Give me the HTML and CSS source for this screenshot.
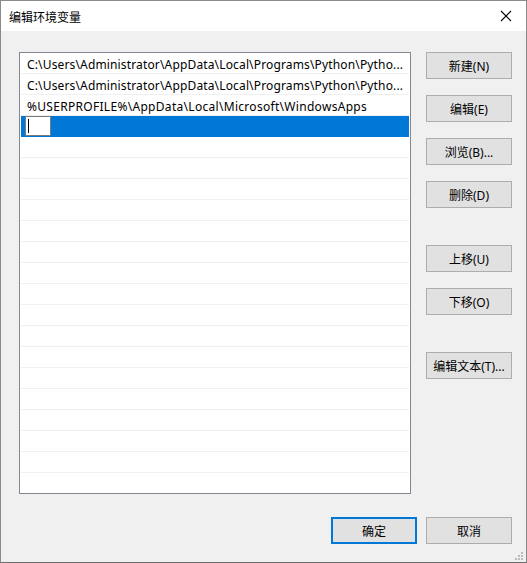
FILE: index.html
```html
<!DOCTYPE html>
<html lang="zh-CN">
<head>
<meta charset="utf-8">
<title>编辑环境变量</title>
<link rel="stylesheet" href="styles.css">
</head>
<body>
<div class="window">
  <div class="titlebar">
    <span class="title">编辑环境变量</span>
    <svg class="close" width="12" height="12" viewBox="0 0 12 12"><path d="M1 1 L11 11 M11 1 L1 11" stroke="#000" stroke-width="1.1" fill="none"/></svg>
  </div>
  <div class="content">
    <div class="main">
      <div class="list">
        <div class="row"><span>C:\Users\Administrator\AppData\Local\Programs\Python\Pytho...</span></div>
        <div class="row"><span>C:\Users\Administrator\AppData\Local\Programs\Python\Pytho...</span></div>
        <div class="row caps"><span>%USERPROFILE%\AppData\Local\Microsoft\WindowsApps</span></div>
        <div class="row selected"><div class="editbox"><i class="caret"></i></div></div>
        <div class="row"></div><div class="row"></div><div class="row"></div><div class="row"></div>
        <div class="row"></div><div class="row"></div><div class="row"></div><div class="row"></div>
        <div class="row"></div><div class="row"></div><div class="row"></div><div class="row"></div>
        <div class="row"></div><div class="row"></div><div class="row"></div><div class="row"></div>
        <div class="row last"></div>
      </div>
      <div class="buttons">
        <div class="group">
          <button class="btn">新建(N)</button>
          <button class="btn">编辑(E)</button>
          <button class="btn">浏览(B)...</button>
          <button class="btn">删除(D)</button>
        </div>
        <div class="group g2">
          <button class="btn">上移(U)</button>
          <button class="btn">下移(O)</button>
        </div>
        <div class="group g3">
          <button class="btn">编辑文本(T)...</button>
        </div>
      </div>
    </div>
    <div class="footer">
      <button class="btn ok">确定</button>
      <button class="btn">取消</button>
    </div>
    <svg class="grip" width="8" height="8" viewBox="0 0 8 8" fill="#bcbcbc">
      <rect x="6" y="0" width="2" height="2"/>
      <rect x="3" y="3" width="2" height="2"/><rect x="6" y="3" width="2" height="2"/>
      <rect x="0" y="6" width="2" height="2"/><rect x="3" y="6" width="2" height="2"/><rect x="6" y="6" width="2" height="2"/>
    </svg>
  </div>
</div>
</body>
</html>
```
FILE: styles.css
```css
html, body {
  margin: 0;
  padding: 0;
  background: #3a3f4a;
}
body {
  font-family: "Noto Sans", "Noto Sans CJK SC", sans-serif;
  font-size: 12px;
  color: #000;
}
.window {
  width: 527px;
  height: 563px;
  box-sizing: border-box;
  border: 1px solid #8a8a8a;
  border-bottom-color: #6c6c6c;
  display: flex;
  flex-direction: column;
  background: #f0f0f0;
}
.titlebar {
  height: 30px;
  background: #fff;
  display: flex;
  align-items: center;
  justify-content: space-between;
  padding: 0 14px 0 8px;
  flex: none;
}
.title {
  font-family: "Noto Sans CJK SC", sans-serif;
  font-size: 12px;
}
.close { display: block; }
.content {
  flex: 1;
  position: relative;
  display: flex;
  flex-direction: column;
  padding: 21px 14px 0 18px;
}
.main {
  display: flex;
  gap: 15px;
}
.list {
  width: 392px;
  height: 442px;
  box-sizing: border-box;
  border: 1px solid #828790;
  background: #fff;
  padding: 0 1px;
  overflow: hidden;
}
.row {
  height: 20px;
  border-bottom: 1px solid #f0f0f0;
  display: flex;
  align-items: center;
  padding-left: 6px;
  white-space: nowrap;
  line-height: 20px;
  letter-spacing: 0.15px;
}
.row span { position: relative; top: 2px; }
.row.caps { letter-spacing: 0.3px; }
.row.selected {
  background: #0078d7;
  padding-left: 4px;
  border-bottom-color: #0078d7;
}
.editbox {
  width: 24px;
  height: 18px;
  background: #fff;
  border: 1px solid #7a7a7a;
  position: relative;
}
.caret {
  position: absolute;
  left: 2px;
  top: 2px;
  width: 1px;
  height: 14px;
  background: #000;
}
.buttons {
  display: flex;
  flex-direction: column;
}
.group {
  display: flex;
  flex-direction: column;
  gap: 16px;
}
.g2 { margin-top: 37px; }
.g3 { margin-top: 37px; }
.btn {
  width: 86px;
  height: 27px;
  box-sizing: border-box;
  border: 1px solid #adadad;
  background: #e1e1e1;
  font-family: "Noto Sans", "Noto Sans CJK SC", sans-serif;
  font-size: 12px;
  color: #000;
  padding: 0;
  margin: 0;
}
.footer {
  display: flex;
  justify-content: flex-end;
  gap: 9px;
  margin-top: 23px;
}
.btn.ok {
  border: 2px solid #0078d7;
}
.grip {
  position: absolute;
  right: 3px;
  bottom: 2px;
}
```
